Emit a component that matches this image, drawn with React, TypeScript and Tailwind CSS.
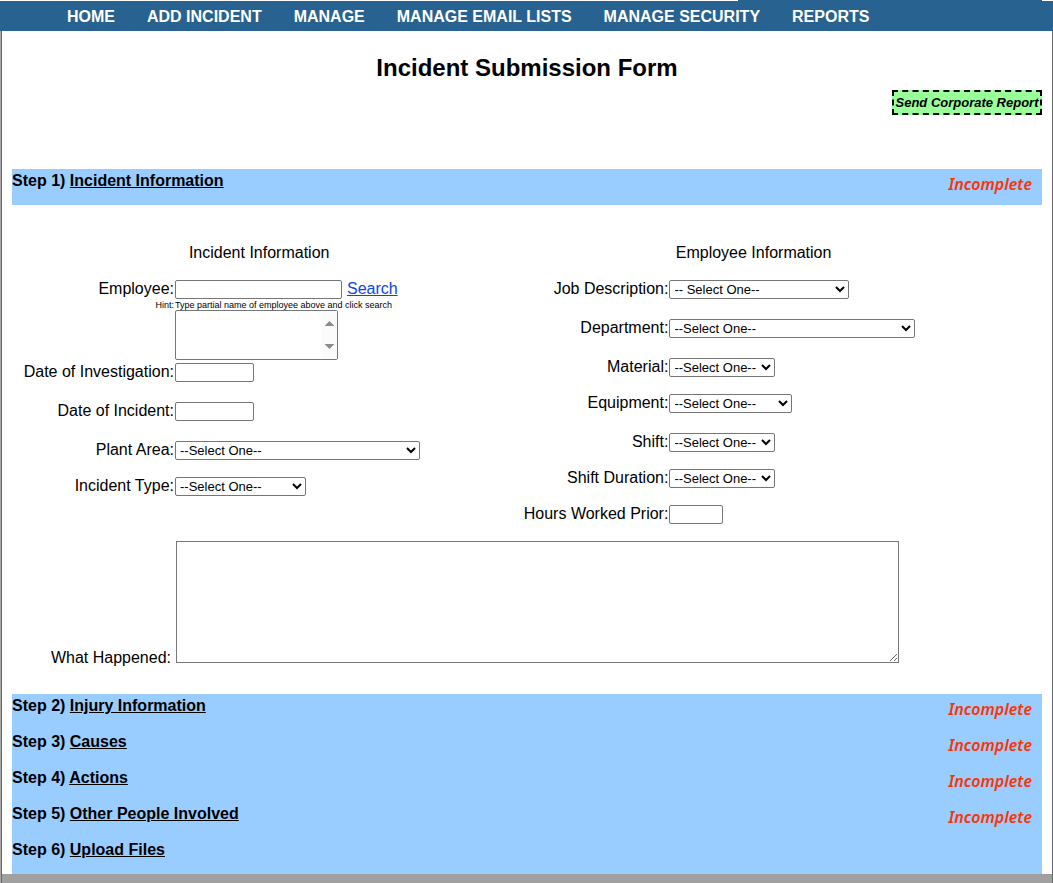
import type { ReactNode } from "react";

const NAV = ["HOME", "ADD INCIDENT", "MANAGE", "MANAGE EMAIL LISTS", "MANAGE SECURITY", "REPORTS"];

const BOX = "h-[19px] shrink-0 rounded-[2px] border border-[#767676] bg-white text-[13px]";

function Step({ number, title, incomplete = true }: { number: number; title: string; incomplete?: boolean }) {
  return (
    <div className="flex h-9 items-start justify-between bg-[#99ccff] pr-2.5">
      <h2 className="text-[16px] leading-6 font-bold">
        Step {number}){" "}
        <a href={`#step-${number}`} className="underline">
          {title}
        </a>
      </h2>
      {incomplete && (
        <span className="pt-[3px] font-['Noto_Sans',sans-serif] text-[16px] leading-6 font-semibold text-[#ff3300] italic">
          Incomplete
        </span>
      )}
    </div>
  );
}

function Row({ id, label, tight, children }: { id: string; label: string; tight?: boolean; children: ReactNode }) {
  return (
    <div className={tight ? "flex h-9 items-start gap-px" : "flex h-[39px] items-start gap-px"}>
      <label htmlFor={id} className="w-[162px] shrink-0 text-right leading-[18px] whitespace-nowrap">
        {label}
      </label>
      {children}
    </div>
  );
}

function Choice({ id, width, text = "--Select One--" }: { id: string; width: string; text?: string }) {
  return (
    <select id={id} className={`${BOX} ${width}`}>
      <option>{text}</option>
    </select>
  );
}

export default function App() {
  return (
    <div className="flex min-h-screen flex-col bg-white font-['Liberation_Sans',Arial,sans-serif] text-[16px] text-black">
      <div className="flex h-px justify-end pr-[11px]">
        <div className="w-[304px] bg-[#286290]" />
      </div>
      <nav className="flex h-[30px] items-center gap-8 bg-[#286290] pt-0.5 pl-[67px] font-bold whitespace-nowrap text-white">
        {NAV.map((item) => (
          <a key={item} href="#">
            {item}
          </a>
        ))}
      </nav>
      <div className="flex grow flex-col border-l border-[#a9a9a9]">
        <div className="flex grow flex-col border-x border-[#696969]">
          <main className="px-2.5">
            <h1 className="pt-[21px] text-center text-[24px] leading-8 font-bold">Incident Submission Form</h1>
            <div className="flex justify-end pt-1.5 pb-[54px]">
              <button
                type="button"
                className="h-[25px] w-[150px] border-2 border-dashed border-black bg-[#99ff99] text-[13px] leading-5 font-bold whitespace-nowrap italic"
              >
                Send Corporate Report
              </button>
            </div>
            <Step number={1} title="Incident Information" />
            <form>
              <div className="grid grid-cols-[48%_48%] pt-[39px]">
                <section>
                  <h3 className="pb-[18px] text-center leading-[18px]">Incident Information</h3>
                  <div className="flex h-5 items-start gap-px">
                    <label htmlFor="employee" className="w-[162px] shrink-0 text-right leading-[18px]">
                      Employee:
                    </label>
                    <input id="employee" className={`${BOX} w-[167px]`} />
                    <a href="#search" className="pl-1 leading-[18px] text-[#0b45ee] underline">
                      Search
                    </a>
                  </div>
                  <p className="flex gap-px text-[9px] leading-[10px] whitespace-nowrap">
                    <span className="w-[162px] shrink-0 text-right">Hint:</span>
                    <span>Type partial name of employee above and click search</span>
                  </p>
                  <div className="flex h-[53px] pl-[163px]">
                    <div className="relative h-[50px] w-[163px]">
                      <select
                        size={2}
                        aria-label="Matching employees"
                        className="h-full w-full rounded-[2px] border border-[#767676] bg-white"
                      />
                      <svg
                        aria-hidden="true"
                        className="pointer-events-none absolute top-px right-px h-12 w-[15px] bg-[#fbfbfb]"
                        viewBox="0 0 15 48"
                        fill="#8b8b8b"
                      >
                        <path d="M2.5 15h10L7.5 10zM2.5 33h10L7.5 38z" />
                      </svg>
                    </div>
                  </div>
                  <Row id="investigation" label="Date of Investigation:">
                    <input id="investigation" className={`${BOX} w-[79px]`} />
                  </Row>
                  <Row id="incident" label="Date of Incident:">
                    <input id="incident" className={`${BOX} w-[79px]`} />
                  </Row>
                  <Row id="area" label="Plant Area:" tight>
                    <Choice id="area" width="w-[245px]" />
                  </Row>
                  <Row id="type" label="Incident Type:" tight>
                    <Choice id="type" width="w-[131px]" />
                  </Row>
                </section>
                <section>
                  <h3 className="pb-[18px] text-center leading-[18px]">Employee Information</h3>
                  <Row id="job" label="Job Description:">
                    <Choice id="job" width="w-[180px]" text="-- Select One--" />
                  </Row>
                  <Row id="department" label="Department:">
                    <Choice id="department" width="w-[246px]" />
                  </Row>
                  <Row id="material" label="Material:" tight>
                    <Choice id="material" width="w-[106px]" />
                  </Row>
                  <Row id="equipment" label="Equipment:">
                    <Choice id="equipment" width="w-[123px]" />
                  </Row>
                  <Row id="shift" label="Shift:" tight>
                    <Choice id="shift" width="w-[106px]" />
                  </Row>
                  <Row id="duration" label="Shift Duration:" tight>
                    <Choice id="duration" width="w-[106px]" />
                  </Row>
                  <Row id="hours" label="Hours Worked Prior:" tight>
                    <input id="hours" className={`${BOX} w-[54px]`} />
                  </Row>
                </section>
              </div>
              <div className="flex items-end gap-[5px] pb-7">
                <label htmlFor="happened" className="w-[159px] shrink-0 text-right leading-4">
                  What Happened:
                </label>
                <textarea
                  id="happened"
                  className="mb-[3px] h-[122px] w-[723px] max-w-full resize border border-[#767676] bg-white"
                />
              </div>
            </form>
            <Step number={2} title="Injury Information" />
            <Step number={3} title="Causes" />
            <Step number={4} title="Actions" />
            <Step number={5} title="Other People Involved" />
            <Step number={6} title="Upload Files" incomplete={false} />
          </main>
          <footer className="min-h-[9px] grow bg-[#a0a0a0]" />
        </div>
      </div>
    </div>
  );
}
